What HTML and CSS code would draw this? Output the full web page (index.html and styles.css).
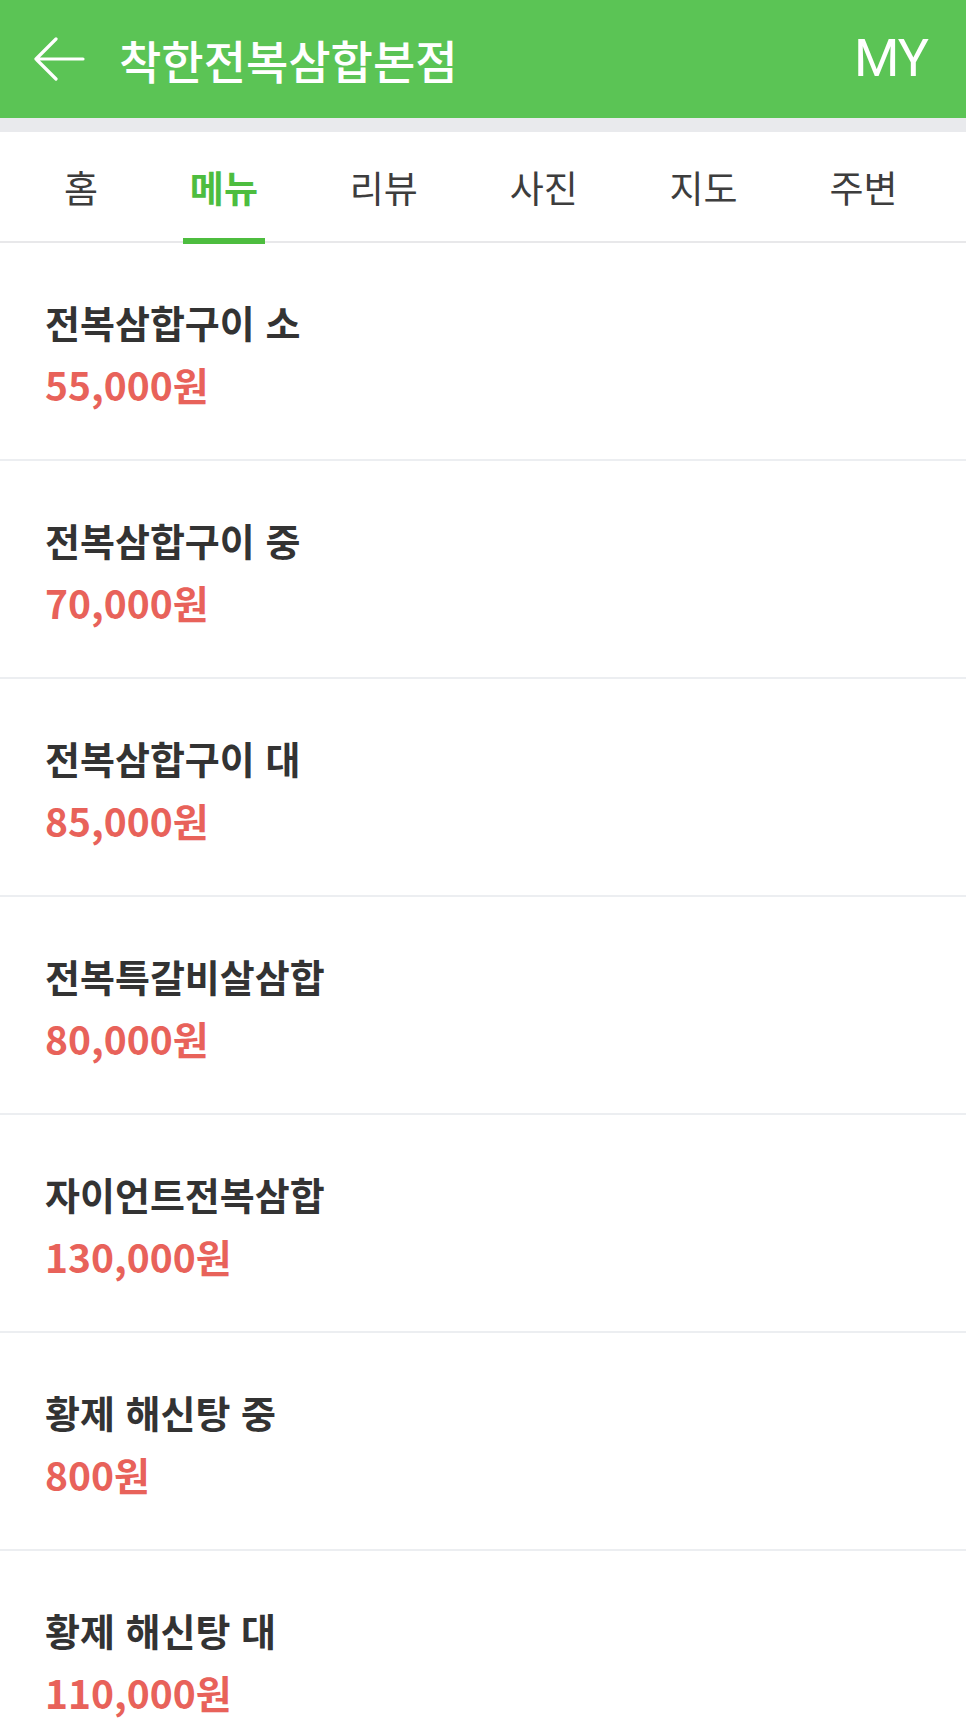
FILE: index.html
```html
<!DOCTYPE html>
<html lang="ko">
<head>
<meta charset="utf-8">
<title>착한전복삼합본점 - 메뉴</title>
<link rel="stylesheet" href="styles.css">
</head>
<body>
<header class="topbar">
  <svg class="back" viewBox="0 0 52 44" width="52" height="44" aria-hidden="true">
    <path d="M50 22 H3 M23 2 L3 22 L23 42" fill="none" stroke="#fff" stroke-width="3.2" stroke-linecap="round" stroke-linejoin="round"/>
  </svg>
  <h1 class="title">착한전복삼합본점</h1>
  <span class="my">MY</span>
</header>
<div class="band"></div>
<nav class="tabs">
  <span class="tab">홈</span>
  <span class="tab active">메뉴</span>
  <span class="tab">리뷰</span>
  <span class="tab">사진</span>
  <span class="tab">지도</span>
  <span class="tab">주변</span>
</nav>
<ul class="menu">
  <li class="item"><div class="name">전복삼합구이 소</div><div class="price">55,000원</div></li>
  <li class="item"><div class="name">전복삼합구이 중</div><div class="price">70,000원</div></li>
  <li class="item"><div class="name">전복삼합구이 대</div><div class="price">85,000원</div></li>
  <li class="item"><div class="name">전복특갈비살삼합</div><div class="price">80,000원</div></li>
  <li class="item"><div class="name">자이언트전복삼합</div><div class="price">130,000원</div></li>
  <li class="item"><div class="name">황제 해신탕 중</div><div class="price">800원</div></li>
  <li class="item"><div class="name">황제 해신탕 대</div><div class="price">110,000원</div></li>
</ul>
</body>
</html>
```
FILE: styles.css
```css
* { box-sizing: border-box; }
html, body { margin: 0; padding: 0; background: #fff; }
body {
  font-family: "Noto Sans CJK KR", "Noto Sans", sans-serif;
  color: #333;
  overflow: hidden;
}
.topbar {
  height: 118px;
  background: #5bc455;
  display: flex;
  align-items: center;
  padding: 0 38px 0 33px;
  color: #fff;
}
.back { display: block; flex: none; }
.title {
  margin: 0 0 0 34px;
  font-size: 46px;
  font-weight: 500;
  letter-spacing: 0;
  line-height: 1;
  flex: 1;
}
.my {
  font-family: Roboto, "Liberation Sans", sans-serif;
  font-size: 52px;
  font-weight: 400;
  line-height: 1;
  letter-spacing: -1px;
}
.band { height: 14px; background: #e9eaed; }
.tabs {
  height: 111px;
  border-bottom: 2px solid #e8e8ea;
  display: flex;
  align-items: center;
  gap: 91.8px;
  padding: 2px 0 0 64px;
  position: relative;
}
.tab {
  position: relative;
  font-size: 37px;
  line-height: 1;
  color: #3d3d3d;
  align-self: stretch;
  display: flex;
  align-items: center;
}
.tab.active { color: #4dbd3f; font-weight: 700; }
.tab.active::after {
  content: "";
  position: absolute;
  left: -7px;
  right: -7px;
  bottom: -3px;
  height: 6px;
  background: #4dbd3f;
}
.menu { list-style: none; margin: 0; padding: 0; }
.item {
  height: 218px;
  border-bottom: 2px solid #eceef1;
  padding: 51px 0 0 45px;
}
.name {
  font-size: 38px;
  font-weight: 700;
  line-height: 56px;
  color: #333;
}
.price {
  margin-top: 6px;
  font-size: 39px;
  font-weight: 700;
  line-height: 56px;
  color: #e8625a;
}
```
